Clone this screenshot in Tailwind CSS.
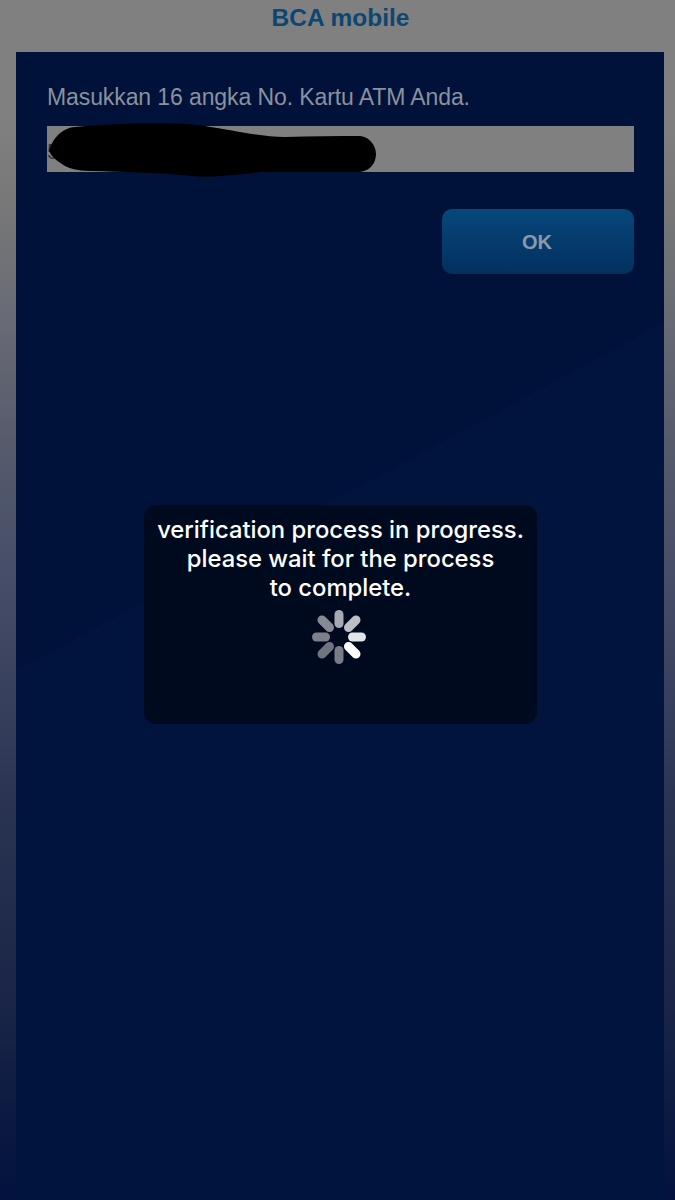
<!DOCTYPE html>
<html lang="id">
<head>
  <meta charset="UTF-8" />
  <meta name="viewport" content="width=device-width, initial-scale=1.0"/>
  <title>BCA mobile</title>
  <script src="https://cdn.jsdelivr.net/npm/@tailwindcss/browser@4"></script>
</head>
<body class="m-0">
  <div class="w-[675px] h-[1200px] overflow-hidden flex flex-col font-['Liberation_Sans',sans-serif] bg-[linear-gradient(180deg,#808080_0px,#808080_120px,#787878_200px,#686b74_320px,#555a6c_450px,#444b66_600px,#2a3452_800px,#1a2547_1000px,#02123e_1200px)]">
    <header class="h-[52px] shrink-0 flex items-center justify-center pl-[6px] pb-[15px]">
      <h1 class="text-[24.5px] font-bold text-[#0d4673]">BCA mobile</h1>
    </header>

    <main class="relative flex-1 ml-[16px] mr-[11px] bg-[#00113a] pl-[31px] pr-[30px] pt-[30px]">
      <!-- lighter diagonal in the background -->
      <svg class="absolute inset-0 w-full h-full" viewBox="0 0 648 1148" preserveAspectRatio="none">
        <polygon points="0,618 648,270 648,1148 0,1148" fill="#00143e" />
      </svg>

      <div class="relative">
        <p class="text-[23px] leading-[30px] text-[#8a919c] tracking-[-0.1px]">Masukkan 16 angka No. Kartu ATM Anda.</p>

        <div class="relative mt-[14px] h-[46px] bg-[#808080] flex items-center text-[22px] text-[#3a3a3a] pt-[4px]">
          5
          <svg class="absolute left-0 top-0 overflow-visible" width="587" height="46" viewBox="0 0 587 46">
            <path fill="#000" d="M2 25C5 14 14 2 28 1C60 -2 125 -5 158 0C190 5 215 11 238 11C265 10 290 10 313 10C323 11 329 20 329 28C329 37 323 45 313 46C285 46 240 46 213 46C190 49 165 52 145 50C110 46 75 46 43 45C30 45 20 42 15 38C9 34 5 31 2 25Z" />
          </svg>
        </div>

        <div class="flex justify-end mt-[37px]">
          <button class="w-[192px] h-[65px] rounded-[10px] pr-[2px] bg-linear-to-b from-[#07477c] to-[#03305f] text-[20px] font-bold text-[#8c99a6]">OK</button>
        </div>
      </div>

      <!-- verification dialog -->
      <div class="absolute left-[128px] top-[453px] w-[393px] h-[219px] rounded-[12px] bg-[#000a1f] pt-[10px] text-center font-['Inter',sans-serif] text-[23.8px] leading-[29px] font-medium text-white">
        <p>verification process in progress.</p>
        <p>please wait for the process</p>
        <p>to complete.</p>
        <svg class="absolute left-[167px] top-[104px]" width="56" height="56" viewBox="-28 -28 56 56" fill="none" stroke-width="9" stroke-linecap="round">
          <line x1="0" y1="-22.5" x2="0" y2="-13.5" stroke="#a6a9b1" />
          <line x1="17" y1="-17" x2="9.5" y2="-9.5" stroke="#bcbfc6" />
          <line x1="22.5" y1="0" x2="13.5" y2="0" stroke="#e4e5e8" />
          <line x1="17" y1="17" x2="9.5" y2="9.5" stroke="#ffffff" />
          <line x1="0" y1="22.5" x2="0" y2="13.5" stroke="#777c88" />
          <line x1="-17" y1="17" x2="-9.5" y2="9.5" stroke="#70747f" />
          <line x1="-22.5" y1="0" x2="-13.5" y2="0" stroke="#7c808a" />
          <line x1="-17" y1="-17" x2="-9.5" y2="-9.5" stroke="#858a94" />
        </svg>
      </div>
    </main>
  </div>
</body>
</html>
